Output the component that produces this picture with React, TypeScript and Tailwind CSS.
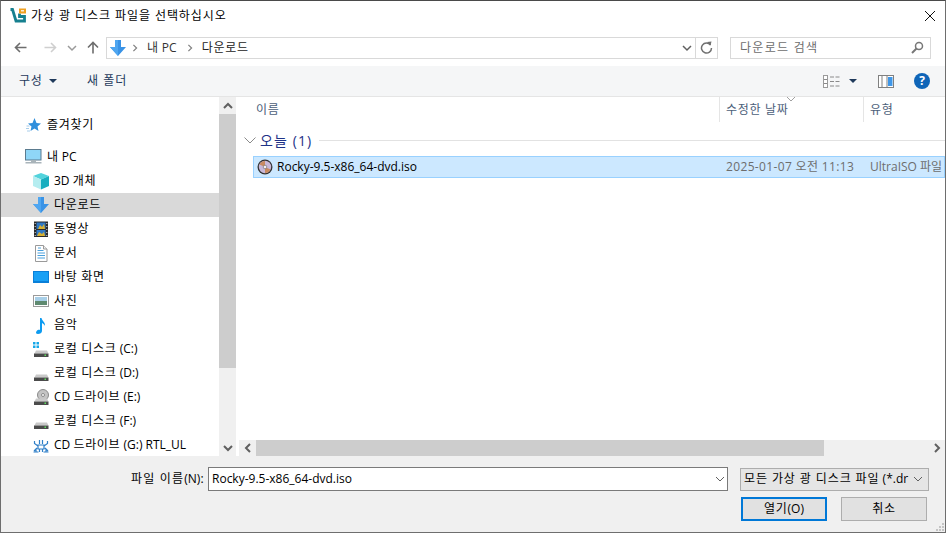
import React from 'react';

const fontStack = 'font-["Open_Sans","Noto_Sans_CJK_KR",sans-serif]';

const DownloadArrow: React.FC<{ size?: number }> = ({ size = 16 }) => (
  <svg width={size} height={size} viewBox="0 0 16 16">
    <path d="M5 0h6v7h5L8 16 0 7h5z" fill="#3a93e6" />
    <path d="M8 16 0 7h5V0h3z" fill="#4fa6f0" />
  </svg>
);

const Drive: React.FC = () => (
  <g>
    <path d="M3 9.500 14 9.500 15.500 12.500H1.500z" fill="#c9c9c9" />
    <rect x="1" y="12.500" width="14.500" height="3.500" fill="#4b4b4b" />
    <rect x="11.500" y="13.500" width="1.500" height="1.500" fill="#5fe05f" />
  </g>
);

const iconBox = (children: React.ReactNode) => (
  <svg width="16" height="17" viewBox="0 0 16 17">{children}</svg>
);

const icons: Record<string, React.ReactNode> = {
  star: iconBox(
    <>
      <path d="M9.500 1 11.500 6 16 6.500 12.500 9.500 13.500 14 9.500 11.500 5.500 14 6.500 9.500 3 6.500 7.500 6z" fill="#2f8fdc" />
      <path d="M1.500 9h3M1 11.500h3M2 14h3" stroke="#a8cdea" strokeWidth="1" />
    </>
  ),
  pc: (
    <svg width="17" height="16" viewBox="0 0 17 16">
      <rect x="0.500" y="0.500" width="15.500" height="10.500" fill="#8fd6f7" stroke="#5b7b8f" />
      <rect x="6" y="11" width="5" height="2" fill="#a9b4ba" />
      <rect x="0.500" y="13" width="16" height="1.500" fill="#a9b4ba" />
    </svg>
  ),
  cube: iconBox(
    <>
      <path d="M8 0 16 3 8 6.500 0 3z" fill="#52d3dc" />
      <path d="M0 3 8 6.500V16.500L0 13z" fill="#b5edf0" />
      <path d="M16 3 8 6.500V16.500L16 13z" fill="#18aebf" />
    </>
  ),
  download: <DownloadArrow />,
  video: iconBox(
    <>
      <rect x="1" y="0.500" width="14" height="15.500" fill="#2b2b2b" />
      <rect x="3.500" y="1.500" width="9" height="6.500" fill="#2f78c4" />
      <path d="M5 8l2-4 2 2 2-3 1 5z" fill="#d8b030" />
      <rect x="3.500" y="9" width="9" height="6" fill="#2f78c4" />
      <path d="M4 15l2-4 3 2 2-2 1 4z" fill="#d8b030" />
      <path d="M2.200 2v1M2.200 5v1M2.200 8v1M2.200 11v1M2.200 14v1M13.800 2v1M13.800 5v1M13.800 8v1M13.800 11v1M13.800 14v1" stroke="#ddd" />
    </>
  ),
  doc: iconBox(
    <>
      <path d="M2.500 0.500H10.500L14 4V16.500H2.500z" fill="#fff" stroke="#9a9a9a" />
      <path d="M10.500 0.500V4H14" fill="#eee" stroke="#9a9a9a" />
      <path d="M5 3h3M4.500 5.500h6M4.500 8h7.500M4.500 10.500h7.500M4.500 13h7.500" stroke="#4aa0dc" />
    </>
  ),
  desktop: iconBox(
    <>
      <rect x="0" y="2" width="16" height="12" fill="#0a7fd8" />
      <rect x="1" y="3" width="14" height="9" fill="#18a0f5" />
    </>
  ),
  photo: iconBox(
    <>
      <rect x="0.500" y="2.500" width="15" height="11" fill="#fff" stroke="#9a9a9a" />
      <rect x="2" y="4" width="12" height="4" fill="#a8cfe8" />
      <rect x="2" y="8" width="12" height="4" fill="#5f8a70" />
    </>
  ),
  music: iconBox(
    <path d="M7 1h1.500c.5 3 4 4 3.500 8-.5-1.500-2-2.500-3-3v8c0 1.800-2 3-4 3s-2.500-1.500-1.500-2.800C4.500 13 6 12.500 7 13z" fill="#0d9bf0" />
  ),
  driveC: iconBox(
    <>
      <path d="M0 1h2.500v2.500H0zM3.500 1H6v2.500H3.500zM0 4.500h2.500V7H0zM3.500 4.500H6V7H3.500z" fill="#18a8e8" />
      <Drive />
    </>
  ),
  drive: iconBox(<Drive />),
  cd: iconBox(
    <>
      <circle cx="10" cy="6" r="5.500" fill="#c4c4c4" stroke="#8a8a8a" />
      <circle cx="10" cy="6" r="1.500" fill="#fff" stroke="#8a8a8a" />
      <Drive />
    </>
  ),
  usb: iconBox(
    <g fill="none" stroke="#2f7fc8" strokeWidth="1.200">
      <path d="M1.500 4v2.500L5 9M14.500 4v2.500L11 9M6.500 3v4M9.500 3v4M5 8h6v4H5zM1 14l3-3M15 14l-3-3M0.500 15h5M10.500 15h5M3 12.500v3M13 12.500v3" />
      <path d="M6.500 12v3M9.500 12v3" />
    </g>
  ),
};

const navItems = [
  { icon: 'pc', label: '내', suffix: ' PC', root: true },
  { icon: 'cube', label: '개체', prefix: '3D ' },
  { icon: 'download', label: '다운로드', active: true },
  { icon: 'video', label: '동영상' },
  { icon: 'doc', label: '문서' },
  { icon: 'desktop', label: '바탕 화면' },
  { icon: 'photo', label: '사진' },
  { icon: 'music', label: '음악' },
  { icon: 'driveC', label: '로컬 디스크', suffix: ' (C:)' },
  { icon: 'drive', label: '로컬 디스크', suffix: ' (D:)' },
  { icon: 'cd', label: '드라이브', prefix: 'CD ', suffix: ' (E:)' },
  { icon: 'drive', label: '로컬 디스크', suffix: ' (F:)' },
  { icon: 'usb', label: '드라이브', prefix: 'CD ', suffix: ' (G:) RTL_UL' },
];

const Chevron: React.FC<{ className?: string; dir?: 'up' | 'down' | 'left' | 'right'; color?: string; w?: number }> = ({
  className,
  dir = 'down',
  color = '#606060',
  w = 2,
}) => {
  const paths = {
    down: 'M1 3l4 4 4-4',
    up: 'M1 7l4-4 4 4',
    left: 'M7 1L3 5l4 4',
    right: 'M3 1l4 4-4 4',
  };
  return (
    <svg width="10" height="10" viewBox="0 0 10 10" className={className}>
      <path d={paths[dir]} fill="none" stroke={color} strokeWidth={w} />
    </svg>
  );
};

const TitleBar = () => (
  <div className="flex h-[29px] items-center bg-white">
    <svg width="17" height="15" viewBox="0 0 17 15" className="ml-[8px]">
      <path d="M1.500 1.500H3.500L7 13H15.500V8.500H10.500V5.500" fill="none" stroke="#16808f" strokeWidth="2.800" />
      <rect x="10" y="0.500" width="7" height="5" fill="#f0a020" />
      <rect x="12" y="2.200" width="3" height="1.200" fill="#fff" />
    </svg>
    <span className="ml-[5px] whitespace-nowrap text-[12px] tracking-[0.93px] text-black">가상 광 디스크 파일을 선택하십시오</span>
    <svg width="10" height="10" viewBox="0 0 10 10" className="ml-auto mr-[10px]">
      <path d="M0 0l10 10M10 0L0 10" stroke="#111" strokeWidth="1" />
    </svg>
  </div>
);

const NavBar = () => (
  <div className="flex h-[36px] items-center bg-white pb-[1px]">
    <svg width="13" height="11" viewBox="0 0 13 11" className="ml-[13px]">
      <path d="M12.500 5.500H1.500M6 1 1.500 5.500 6 10" fill="none" stroke="#6d6d6d" strokeWidth="1.600" />
    </svg>
    <svg width="13" height="11" viewBox="0 0 13 11" className="ml-[17px]">
      <path d="M0.500 5.500H11.500M7 1l4.500 4.500L7 10" fill="none" stroke="#cfcfcf" strokeWidth="1.600" />
    </svg>
    <Chevron className="ml-[10px]" color="#9a9a9a" w={1.500} />
    <svg width="12" height="13" viewBox="0 0 12 13" className="ml-[10px]">
      <path d="M6 12.500V1.500M1 6.500l5-5 5 5" fill="none" stroke="#6d6d6d" strokeWidth="1.600" />
    </svg>
    <div className="ml-[7px] flex h-[22px] w-[612px] items-center border border-[#d9d9d9] text-[12px]">
      <span className="ml-[3px] flex">
        <DownloadArrow />
      </span>
      <Chevron className="ml-[5px] h-[8px] w-[8px]" dir="right" color="#808080" w={1.500} />
      <span className="ml-[8px] text-[#333]">
        <span className="tracking-[0.7px]">내</span> PC
      </span>
      <Chevron className="ml-[9px] h-[8px] w-[8px]" dir="right" color="#808080" w={1.500} />
      <span className="ml-[8px] tracking-[0.7px] text-[#222]">다운로드</span>
      <Chevron className="ml-auto mr-[3px]" color="#606060" w={1.500} />
      <span className="h-full w-px bg-[#d9d9d9]" />
      <svg width="13" height="13" viewBox="0 0 13 13" className="mx-[4px]">
        <path d="M10.500 4A5 5 0 1 0 11.500 7" fill="none" stroke="#707070" strokeWidth="1.500" />
        <path d="M7 1l3.500 3.500L11.500 0.500z" fill="#707070" />
      </svg>
    </div>
    <div className="ml-[12px] flex h-[22px] w-[201px] items-center border border-[#d9d9d9] pl-[9px] pr-[6px] text-[12px] tracking-[1.3px] text-[#6d6d6d]">
      다운로드 검색
      <svg width="13" height="13" viewBox="0 0 13 13" className="ml-auto">
        <circle cx="8" cy="5" r="3.500" fill="none" stroke="#777" strokeWidth="1.500" />
        <path d="M5.500 7.500 1 12" stroke="#777" strokeWidth="2" />
      </svg>
    </div>
  </div>
);

const ToolBar = () => (
  <div className="flex h-[31px] items-center border-b border-[#e5e5e5] bg-[#f5f6f7] text-[12px] text-[#1e395b]">
    <span className="ml-[18px] w-[30px] tracking-[0.7px]">구성</span>
    <svg width="8" height="4" viewBox="0 0 8 4">
      <path d="M0 0h8L4 4z" fill="#1e395b" />
    </svg>
    <span className="ml-[30px] tracking-[1px]">새 폴더</span>
    <svg width="17" height="13" viewBox="0 0 17 13" className="ml-auto">
      <rect x="0.500" y="0.500" width="4" height="12" fill="#fff" stroke="#9a9a9a" />
      <path d="M7 2h4M12.500 2h4M7 6.500h4M12.500 6.500h4M7 11h4M12.500 11h4M1 4.500h3M1 8.500h3" stroke="#8a8a8a" />
    </svg>
    <svg width="8" height="4" viewBox="0 0 8 4" className="ml-[9px]">
      <path d="M0 0h8L4 4z" fill="#1e395b" />
    </svg>
    <svg width="16" height="13" viewBox="0 0 16 13" className="ml-[21px]">
      <rect x="0.500" y="0.500" width="15" height="12" fill="#fff" stroke="#808080" />
      <rect x="10" y="2" width="4.500" height="9" fill="#3f97e8" />
      <path d="M4 1v11M9 1v11" stroke="#808080" />
    </svg>
    <span className="ml-[20px] mr-[15px] flex h-[16px] w-[16px] items-center justify-center rounded-full bg-[#0f65b8] text-[12px] font-bold text-white">
      ?
    </span>
  </div>
);

const Sidebar = () => (
  <div className="flex w-[235px] shrink-0">
    <div className="w-[218px] overflow-hidden bg-white pt-[16px] text-[12px] text-black">
      <div className="flex h-[24px] items-center pl-[24px]">
        <span className="flex w-[22px]">{icons.star}</span>
        <span className="tracking-[0.7px]">즐겨찾기</span>
      </div>
      <div className="mt-[8px]">
        {navItems.map((item, i) => (
          <div
            key={i}
            className={`flex h-[24px] items-center ${item.root ? 'pl-[24px]' : 'pl-[32px]'} ${
              item.active ? 'bg-[#d9d9d9]' : ''
            }`}
          >
            <span className={`flex ${item.root ? 'w-[22px]' : 'w-[21px]'}`}>{icons[item.icon]}</span>
            <span className="whitespace-pre">
              {item.prefix}
              <span className="tracking-[0.7px]">{item.label}</span>
              {item.suffix}
            </span>
          </div>
        ))}
      </div>
    </div>
    <div className="flex w-[17px] flex-col bg-[#f0f0f0]">
      <div className="flex h-[17px] items-center justify-center">
        <Chevron dir="up" />
      </div>
      <div className="h-[254px] bg-[#cdcdcd]" />
      <div className="mt-auto flex h-[17px] items-center justify-center">
        <Chevron />
      </div>
    </div>
  </div>
);

const FileList = () => (
  <div className="flex min-w-0 flex-1 flex-col bg-white">
    <div className="relative flex h-[25px] text-[12px] tracking-[0.7px] text-[#4c607a]">
      <div className="w-[483px] pl-[20px] pt-[4px]">이름</div>
      <div className="w-[144px] border-l border-[#e5e5e5] pl-[6px] pt-[4px]">수정한 날짜</div>
      <div className="flex-1 border-l border-[#e5e5e5] pl-[6px] pt-[4px]">유형</div>
      <Chevron className="absolute left-[550px] top-[-3px]" color="#a0a0a0" w={1} />
    </div>
    <div className="flex h-[34px] items-center pl-[8px] pt-[3px]">
      <svg width="12" height="7" viewBox="0 0 12 7">
        <path d="M0.500 0.500 6 6l5.500-5.500" fill="none" stroke="#8a8a8a" />
      </svg>
      <span className="ml-[4px] text-[14px] tracking-[1.1px] text-[#1e3287]">오늘 (1)</span>
      <span className="ml-[7px] h-px flex-1 bg-[#e2e2e2]" />
    </div>
    <div className="ml-[17px] flex h-[22px] items-center border border-[#99d1ff] bg-[#cce8ff] text-[12px]">
      <svg width="16" height="16" viewBox="0 0 16 16" className="ml-[3px]">
        <circle cx="8" cy="8" r="7.500" fill="#333" />
        <circle cx="8" cy="8" r="6.200" fill="#c8b8d8" />
        <path d="M8 8 2.500 5.500A6 6 0 0 1 8 2zM8 8l5.500 2.500A6 6 0 0 1 8 14z" fill="#c88a60" />
        <circle cx="8" cy="8" r="1.800" fill="#f4f0f0" stroke="#666" strokeWidth="0.600" />
      </svg>
      <span className="ml-[4px] w-[449px] text-black">Rocky-9.5-x86_64-dvd.iso</span>
      <span className="w-[144px] tracking-[0.35px] text-[#6d6d6d]">2025-01-07 오전 11:13</span>
      <span className="min-w-0 flex-1 overflow-hidden whitespace-nowrap text-[#6d6d6d]">UltraISO 파일</span>
    </div>
    <div className="mt-auto ml-[3px] flex h-[16px] items-center bg-[#f0f0f0]">
      <div className="flex w-[17px] justify-center">
        <Chevron dir="left" />
      </div>
      <div className="h-full w-[568px] bg-[#cdcdcd]" />
      <div className="ml-auto flex w-[17px] justify-center">
        <Chevron dir="right" />
      </div>
    </div>
  </div>
);

const Footer = () => (
  <div className="relative h-[76px] shrink-0 bg-[#f0f0f0] text-[12px] text-black">
    <div className="flex items-center pt-[11px]">
      <span className="ml-[130px] w-[77px] whitespace-nowrap">
        <span className="tracking-[1.2px]">파일 이름</span>(N):
      </span>
      <div className="flex h-[24px] w-[520px] items-center border border-[#7a7a7a] bg-white pl-[3px]">
        Rocky-9.5-x86_64-dvd.iso
        <Chevron className="ml-auto mr-[2px]" color="#606060" w={1} />
      </div>
      <div className="ml-[12px] flex h-[23px] w-[189px] items-center border border-[#adadad] bg-[#e5e5e5] pl-[3px]">
        <span className="w-[168px] overflow-hidden whitespace-nowrap">
          <span className="tracking-[0.9px]">모든 가상 광 디스크 파일</span> (*.dr
        </span>
        <Chevron className="ml-[1px]" color="#606060" w={1} />
      </div>
    </div>
    <div className="mt-[6px] flex justify-end gap-[14px] pr-[18px]">
      <button className="h-[24px] w-[86px] border-2 border-[#0078d7] bg-[#e1e1e1] text-[12px]">
        <span className="tracking-[0.7px]">열기</span>(O)
      </button>
      <button className="h-[24px] w-[86px] border border-[#adadad] bg-[#e1e1e1] text-[12px] tracking-[0.7px]">취소</button>
    </div>
    <svg width="10" height="10" viewBox="0 0 10 10" className="absolute bottom-0 right-0">
      <path d="M7 1h2v2H7zM4 4h2v2H4zM7 4h2v2H7zM1 7h2v2H1zM4 7h2v2H4zM7 7h2v2H7z" fill="#c4c4c4" />
    </svg>
  </div>
);

export default function App() {
  return (
    <div className={`flex h-[533px] w-[946px] flex-col overflow-hidden border border-t-[#4a4a4a] border-x-[#6e6e6e] border-b-[#6e6e6e] bg-white ${fontStack}`}>
      <TitleBar />
      <NavBar />
      <ToolBar />
      <div className="flex min-h-0 flex-1">
        <Sidebar />
        <FileList />
      </div>
      <Footer />
    </div>
  );
}
